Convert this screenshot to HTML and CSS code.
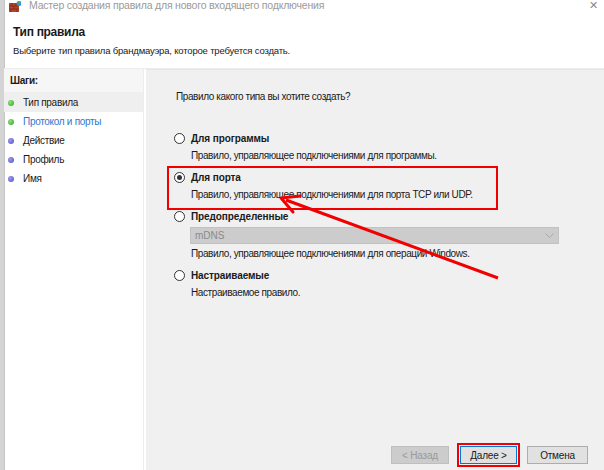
FILE: index.html
```html
<!DOCTYPE html>
<html lang="ru">
  <head>
    <meta charset="UTF-8" />
    <title>Мастер создания правила для нового входящего подключения</title>
    <link rel="stylesheet" href="styles.css">
  </head>
  <body>
    <div class="window">
      <!-- Title bar -->
      <div class="titlebar">
        <svg class="app-icon" width="12" height="11" viewBox="0 0 12 11">
          <rect x="0" y="2" width="10" height="9" fill="#b5452a" />
          <path d="M0 5h10M0 8h10M3 2v3M7 2v3M5 5v3M2 8v3M8 8v3" stroke="#7a2a18" stroke-width="0.8" />
          <circle cx="10" cy="2.5" r="2.5" fill="#2e8de0" />
          <path d="M8.5 1.5a2 2 0 0 1 3 0.5l-1 1.5z" fill="#4cb848" />
        </svg>
        <span class="title">Мастер создания правила для нового входящего подключения</span>
        <span class="close">&#x2715;</span>
      </div>

      <!-- Header -->
      <div class="header">
        <h1>Тип правила</h1>
        <p>Выберите тип правила брандмауэра, которое требуется создать.</p>
      </div>

      <div class="body">
        <!-- Steps -->
        <div class="steps">
          <div class="steps-title">Шаги:</div>
          <ul>
            <li class="done current"><span class="dot"></span>Тип правила</li>
            <li class="done link"><span class="dot"></span>Протокол и порты</li>
            <li><span class="dot"></span>Действие</li>
            <li><span class="dot"></span>Профиль</li>
            <li><span class="dot"></span>Имя</li>
          </ul>
        </div>

        <!-- Main panel -->
        <div class="main">
          <p class="question">Правило какого типа вы хотите создать?</p>

          <div class="options">
            <div class="option">
              <div class="option-label"><span class="radio"></span>Для программы</div>
              <div class="option-desc">Правило, управляющее подключениями для программы.</div>
            </div>
            <div class="option">
              <div class="option-label"><span class="radio checked"></span>Для порта</div>
              <div class="option-desc">Правило, управляющее подключениями для порта TCP или UDP.</div>
            </div>
            <div class="option">
              <div class="option-label"><span class="radio"></span>Предопределенные</div>
              <div class="select">
                <span>mDNS</span>
                <svg width="9" height="6" viewBox="0 0 9 6"><path d="M0.5 0.5l4 4 4-4" fill="none" stroke="#a8a8a8" stroke-width="1" /></svg>
              </div>
              <div class="option-desc">Правило, управляющее подключениями для операций Windows.</div>
            </div>
            <div class="option">
              <div class="option-label"><span class="radio"></span>Настраиваемые</div>
              <div class="option-desc">Настраиваемое правило.</div>
            </div>
          </div>

          <div class="buttons">
            <button class="back" disabled>&lt; Назад</button>
            <button class="primary">Далее &gt;</button>
            <button class="cancel">Отмена</button>
          </div>

          <!-- Annotations -->
          <div class="mark-box"></div>
          <svg class="arrow" width="604" height="470" viewBox="0 0 604 470">
            <path d="M498 278L286 200" stroke="#f20000" stroke-width="3" fill="none" />
            <path d="M281 198L300 196M281 198L293 212" stroke="#f20000" stroke-width="3" fill="none" stroke-linecap="round" />
          </svg>
        </div>
      </div>
    </div>
  </body>
</html>
```

FILE: styles.css
```css
html,
body {
  margin: 0;
  padding: 0;
}

body {
  font-family: "Liberation Sans", Arial, sans-serif;
  font-size: 10px;
  letter-spacing: -0.4px;
  color: #1a1a1a;
  background: #fff;
}

.window {
  width: 600px;
  height: 470px;
  border-left: 4px solid #d4d4d4;
  box-shadow: inset 1px 0 0 #c4c4c4;
  display: flex;
  flex-direction: column;
  overflow: hidden;
}

.titlebar {
  height: 11px;
  display: flex;
  align-items: center;
  padding-left: 5px;
  color: #9a9a9a;
  font-size: 10.5px;
  letter-spacing: -0.2px;
  line-height: 11px;
}

.app-icon {
  margin-right: 8px;
  margin-top: 1px;
}

.title {
  flex: 1;
}

.close {
  width: 14px;
  font-size: 11px;
  color: #8a8a8a;
  margin-right: 1px;
}

.header {
  height: 57px;
  padding-left: 9px;
  border-bottom: 1px solid #ececec;
}

.header h1 {
  margin: 13px 0 0;
  font-size: 12px;
  font-weight: bold;
  letter-spacing: -0.3px;
  line-height: 16px;
}

.header p {
  margin: 3px 0 0;
  font-size: 9.5px;
  letter-spacing: -0.18px;
  line-height: 16px;
}

.body {
  flex: 1;
  display: flex;
}

.steps {
  width: 139px;
  border-right: 1px solid #ececec;
  margin-right: 2px;
  letter-spacing: -0.3px;
}

.steps-title {
  height: 23px;
  line-height: 23px;
  padding-left: 6px;
  font-weight: bold;
  background: #f6f6f6;
  border-bottom: 1px solid #f0f0f0;
}

.steps ul {
  list-style: none;
  margin: 0;
  padding: 0;
}

.steps li {
  height: 19px;
  line-height: 19px;
  display: flex;
  align-items: center;
  padding-left: 4px;
}

.steps li.current {
  background: #efefef;
}

.steps li.link {
  color: #2f76d0;
}

.dot {
  width: 6px;
  height: 6px;
  border-radius: 50%;
  margin-right: 9px;
  background: radial-gradient(circle at 35% 35%, #9b9bf0, #5050c0);
}

.steps li.done .dot {
  background: radial-gradient(circle at 35% 35%, #8fe27a, #33a024);
}

.main {
  flex: 1;
  background: #f0f0f0;
  border-top: 1px solid #e6e6e6;
  position: relative;
  display: flex;
  flex-direction: column;
  padding-left: 28px;
}

.question {
  margin: 18px 0 0;
  line-height: 17px;
  padding-left: 2px;
}

.options {
  margin-top: 25px;
  display: flex;
  flex-direction: column;
  gap: 5px;
}

.option-label {
  display: flex;
  align-items: center;
  font-weight: bold;
  letter-spacing: -0.1px;
  line-height: 17px;
}

.radio {
  width: 11px;
  height: 11px;
  border: 1px solid #333;
  border-radius: 50%;
  background: #fff;
  margin-right: 6px;
  box-sizing: border-box;
  position: relative;
}

.radio.checked::after {
  content: "";
  position: absolute;
  left: 2px;
  top: 2px;
  width: 5px;
  height: 5px;
  border-radius: 50%;
  background: #333;
}

.option-desc {
  padding-left: 17px;
  line-height: 17px;
}

.select {
  margin: 2px 0 1px 16px;
  width: 369px;
  height: 17px;
  background: #cccccc;
  border: 1px solid #c2c2c2;
  display: flex;
  align-items: center;
  justify-content: space-between;
  padding: 0 4px;
  box-sizing: border-box;
  color: #8a8a8a;
  letter-spacing: 0;
}

.buttons {
  margin-top: auto;
  margin-bottom: 6px;
  display: flex;
  justify-content: flex-end;
  gap: 10px;
  padding-right: 16px;
}

.buttons button {
  width: 58px;
  height: 18px;
  font-family: inherit;
  font-size: 10px;
  letter-spacing: -0.2px;
  background: #e1e1e1;
  border: 1px solid #adadad;
  padding: 0;
  color: #1a1a1a;
}

.buttons .back {
  margin-right: 1px;
}

.buttons button:disabled {
  background: #cccccc;
  border-color: #bfbfbf;
  color: #9a9a9a;
}

.buttons .primary {
  width: 57px;
  border-color: #0078d7;
  outline: 2px solid #f00000;
  outline-offset: 1px;
}

.buttons .cancel {
  width: 61px;
}

.mark-box {
  position: absolute;
  left: 21px;
  top: 96px;
  width: 327px;
  height: 40px;
  border: 2px solid #f00000;
}

.arrow {
  position: absolute;
  left: -146px;
  top: -70px;
  pointer-events: none;
}
```
